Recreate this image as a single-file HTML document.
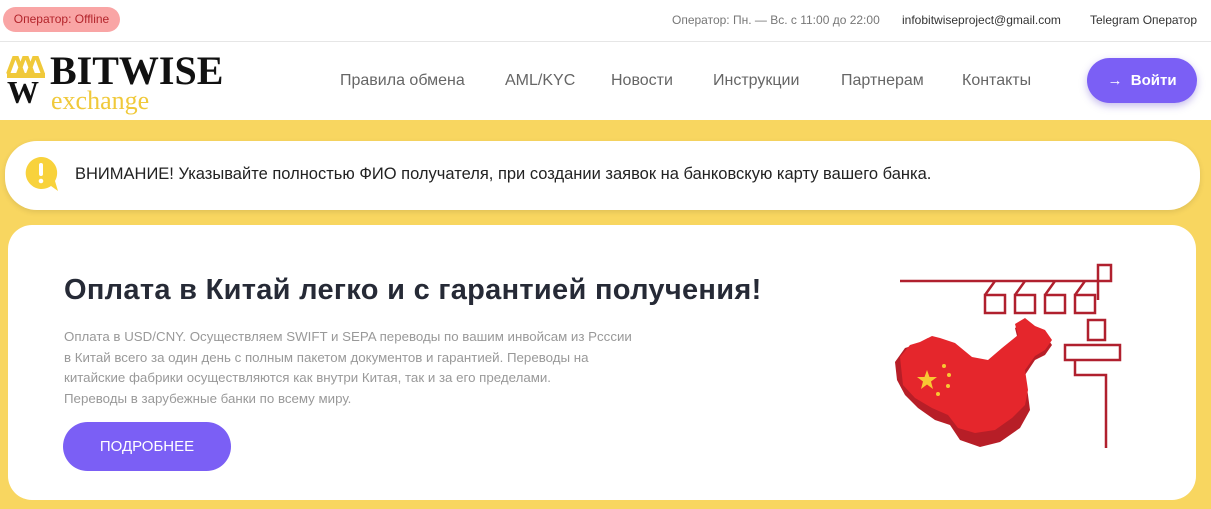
<!DOCTYPE html>
<html><head><meta charset="utf-8"><style>
*{margin:0;padding:0;box-sizing:border-box}
body{width:1211px;height:509px;overflow:hidden;background:#f8d660;font-family:"Liberation Sans",sans-serif;position:relative}
.top{position:absolute;left:0;top:0;width:1211px;height:42px;background:#fff;border-bottom:1px solid #e6e6e6}
.op{position:absolute;left:3px;top:7px;width:117px;height:25px;border-radius:13px;background:#f9a5a5;color:#b3242b;font-size:12px;line-height:25px;text-align:center}
.tr{position:absolute;top:13px;font-size:12px;color:#333}
.hdr{position:absolute;left:0;top:42px;width:1211px;height:78px;background:#fff}
.nav{position:absolute;top:30px;font-size:16px;color:#666}
.login{position:absolute;left:1087px;top:16px;width:110px;height:45px;border-radius:23px;background:#7b5ff5;color:#fff;font-weight:bold;font-size:15px;line-height:45px;text-align:center;box-shadow:0 3px 8px rgba(90,60,200,.35)}
.alert{position:absolute;left:5px;top:141px;width:1195px;height:69px;background:#fff;border-radius:32px;box-shadow:0 2px 6px rgba(0,0,0,.1)}
.card{position:absolute;left:8px;top:225px;width:1188px;height:275px;background:#fff;border-radius:24px}
h1{position:absolute;left:56px;top:49px;font-size:29px;font-weight:bold;color:#262a36;letter-spacing:.3px;white-space:nowrap}
.p{position:absolute;left:56px;top:102px;font-size:13.3px;line-height:20.5px;color:#999;white-space:nowrap}
.btn{position:absolute;left:55px;top:197px;width:168px;height:49px;border-radius:25px;background:#7b5ff5;color:#fff;font-size:15px;line-height:49px;text-align:center}
</style></head><body>
<div class="top">
<div class="op">Оператор: Offline</div>
<div class="tr" style="left:672px;color:#777">Оператор: Пн. — Вс. с 11:00 до 22:00</div>
<div class="tr" style="left:902px">infobitwiseproject@gmail.com</div>
<div class="tr" style="left:1090px">Telegram Оператор</div>
</div>
<div class="hdr">
<svg style="position:absolute;left:6px;top:12px" width="40" height="30" viewBox="0 0 40 30"><path d="M2 20 L8 4 L11 4 L17 20 M12 20 L18 4 L21 4 L27 20 M22 20 L28 4 L31 4 L37 20" stroke="#f0c93a" stroke-width="4" fill="none"/><rect x="1" y="19" width="38" height="5" fill="#f0c93a"/></svg>
<div style="position:absolute;left:7px;top:34px;font-family:'Liberation Serif',serif;font-weight:bold;font-size:32px;color:#111;line-height:32px">W</div>
<div style="position:absolute;left:50px;top:8px;font-family:'Liberation Serif',serif;font-weight:bold;font-size:40px;color:#111;line-height:42px">BITWISE</div>
<div style="position:absolute;left:51px;top:44px;font-family:'Liberation Serif',serif;font-size:26px;color:#f0c93a;line-height:30px">exchange</div>
<div class="nav" style="left:340px">Правила обмена</div>
<div class="nav" style="left:505px">AML/KYC</div>
<div class="nav" style="left:611px">Новости</div>
<div class="nav" style="left:713px">Инструкции</div>
<div class="nav" style="left:841px">Партнерам</div>
<div class="nav" style="left:962px">Контакты</div>
<div class="login">&#8594;&nbsp; Войти</div>
</div>
<div class="alert">
<svg style="position:absolute;left:19px;top:15px" width="36" height="36" viewBox="0 0 36 36"><path d="M17 1 A16 16 0 1 0 27 30 L34 35 L31 25 A16 16 0 0 0 17 1Z" fill="#f8d23c"/><rect x="15" y="7" width="4" height="13" rx="2" fill="#fff"/><circle cx="17" cy="25" r="2.3" fill="#fff"/></svg>
<div style="position:absolute;left:70px;top:24px;font-size:16.5px;color:#222">ВНИМАНИЕ! Указывайте полностью ФИО получателя, при создании заявок на банковскую карту вашего банка.</div>
</div>
<div class="card">
<h1>Оплата в Китай легко и с гарантией получения!</h1>
<div class="p">Оплата в USD/CNY. Осуществляем SWIFT и SEPA переводы по вашим инвойсам из Рссcии<br>в Китай всего за один день с полным пакетом документов и гарантией. Переводы на<br>китайские фабрики осуществляются как внутри Китая, так и за его пределами.<br>Переводы в зарубежные банки по всему миру.</div>
<div class="btn">ПОДРОБНЕЕ</div>
<svg style="position:absolute;left:852px;top:25px" width="300" height="210" viewBox="860 250 300 210">
<g fill="none" stroke="#b0202e" stroke-width="2.5">
<path d="M900 281 H1100 M1098 265 H1111 V281 H1098 Z M985 295 V313 H1005 V295 Z M1015 295 V313 H1035 V295 Z M1045 295 V313 H1065 V295 Z M1075 295 V313 H1095 V295 Z M985 295 L995 281 M1015 295 L1025 281 M1045 295 L1055 281 M1075 295 L1085 281 M1098 281 V300 M1088 320 V340 H1105 V320 Z M1065 345 H1120 V360 H1065 Z M1075 360 V375 H1106 V448"/>
</g>
<path d="M895 362 L905 348 L915 345 L928 338 L935 340 L950 345 L968 360 L985 365 L1000 352 L1018 340 L1015 328 L1025 322 L1035 330 L1045 335 L1052 345 L1045 355 L1035 360 L1025 375 L1028 395 L1030 410 L1020 428 L1000 442 L980 447 L960 440 L950 425 L935 420 L918 408 L905 395 L897 380 Z" fill="#b71e27"/>
<path d="M900 357 L910 345 L920 342 L932 336 L940 338 L955 343 L972 357 L988 360 L1002 348 L1018 335 L1015 324 L1025 318 L1035 326 L1045 330 L1052 340 L1045 350 L1035 356 L1025 370 L1028 390 L1025 405 L1012 418 L995 430 L975 433 L958 428 L948 415 L932 408 L915 398 L903 385 Z" fill="#e5262c"/>
<polygon points="927,370 929.5,377 937,377 931,381.5 933,389 927,384.5 921,389 923,381.5 917,377 924.5,377" fill="#f8c833"/>
<g fill="#f8c833"><circle cx="944" cy="366" r="2"/><circle cx="949" cy="375" r="2"/><circle cx="948" cy="386" r="2"/><circle cx="938" cy="394" r="2"/></g>
</svg>
</div>
</body></html>
